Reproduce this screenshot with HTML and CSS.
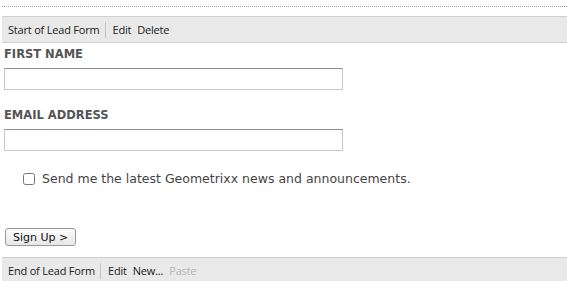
FILE: index.html
```html
<!DOCTYPE html>
<html>
<head>
<meta charset="utf-8" />
<title>Lead Form</title>
<link rel="stylesheet" href="styles.css">
</head>
<body>
<div class="page">
  <div class="dots"></div>

  <div class="editbar">
    <span class="title">Start of Lead Form</span>
    <a href="#">Edit</a>
    <a href="#">Delete</a>
  </div>

  <form class="lead-form">
    <label class="field-label" for="first-name">FIRST NAME</label>
    <input class="field" id="first-name" type="text" />

    <label class="field-label" for="email">EMAIL ADDRESS</label>
    <input class="field" id="email" type="text" />

    <label class="optin">
      <input type="checkbox" />
      <span>Send me the latest Geometrixx news and announcements.</span>
    </label>

    <button class="submit" type="button">Sign Up &gt;</button>
  </form>

  <div class="editbar bottom">
    <span class="title">End of Lead Form</span>
    <a href="#">Edit</a>
    <a href="#">New...</a>
    <a href="#" class="disabled">Paste</a>
  </div>
</div>
</body>
</html>
```

FILE: styles.css
```css
body {
  margin: 0;
  background: #fff;
  font-family: "DejaVu Sans", Verdana, sans-serif;
  color: #333;
  overflow: hidden;
}
.page {
  padding: 6px 0 0 2px;
}
.dots {
  height: 0;
  border-top: 1px dotted #999;
  margin-bottom: 9px;
}
.editbar {
  display: flex;
  align-items: center;
  height: 25px;
  background: #e9e9e9;
  border-top: 1px solid #cfcfcf;
  border-bottom: 1px solid #cfcfcf;
  padding-left: 6px;
  font-family: "Open Sans", "DejaVu Sans", sans-serif;
  font-size: 11px;
  letter-spacing: -0.2px;
  color: #222;
}
.editbar .title {
  padding-right: 5px;
  margin-right: 7px;
  border-right: 1px solid #c4c4c4;
  line-height: 16px;
}
.editbar a {
  color: #222;
  text-decoration: none;
  margin-right: 6px;
}
.editbar a.disabled {
  color: #b5b5b5;
}
.editbar.bottom {
  margin-top: 11px;
  border-bottom: none;
}
.lead-form {
  display: flex;
  flex-direction: column;
  align-items: flex-start;
  padding: 4px 0 0 2px;
}
.field-label {
  font-size: 11.5px;
  line-height: 15px;
  font-weight: bold;
  color: #555;
  margin-bottom: 6px;
}
.field {
  width: 339px;
  height: 22px;
  box-sizing: border-box;
  margin: 0 0 18px 0;
  border: 1px solid #c8c8c8;
  border-top-color: #8e8e8e;
  padding: 0;
}
.optin {
  display: flex;
  align-items: center;
  margin: 2px 0 0 18px;
  font-size: 12.5px;
  line-height: 15px;
  color: #444;
}
.optin input {
  width: 12px;
  height: 12px;
  margin: 0 7px 0 1px;
}
.submit {
  margin-top: 42px;
  margin-left: 1px;
  height: 18px;
  padding: 0 7px;
  border: 1px solid #9a9a9a;
  border-radius: 3px;
  background: linear-gradient(#fdfdfd, #e6e6e6);
  font-family: "DejaVu Sans", Verdana, sans-serif;
  font-size: 11px;
  color: #111;
}
```
